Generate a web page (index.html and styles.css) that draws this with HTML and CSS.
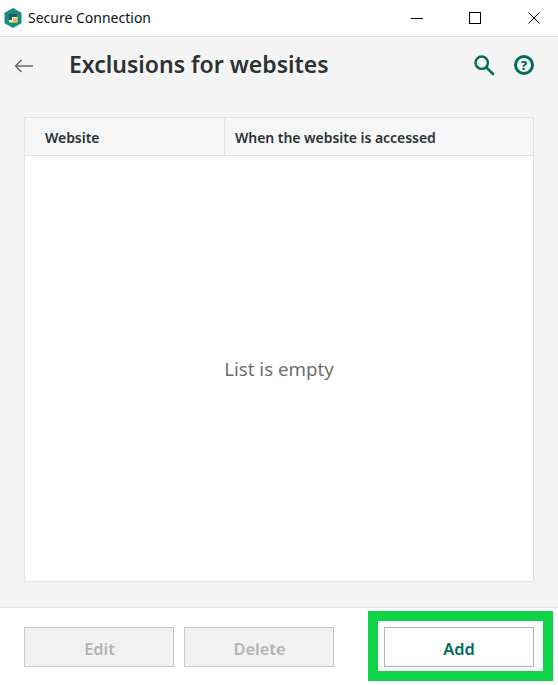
FILE: index.html
```html
<!DOCTYPE html>
<html lang="en">
<head>
<meta charset="utf-8">
<title>Secure Connection</title>
<link rel="stylesheet" href="styles.css">
</head>
<body>
<div class="window">
  <header class="titlebar">
    <div class="app">
      <svg class="logo" width="18" height="20" viewBox="0 0 18 20">
        <path d="M9 0 L17.5 4.8 V15.2 L9 20 L0.5 15.2 V4.8 Z" fill="#12907c"/>
        <rect x="5" y="6" width="8.5" height="8.5" fill="#e4ecec"/>
        <rect x="5" y="6" width="8.5" height="3" fill="#34505c"/>
        <rect x="5" y="9" width="3" height="3" fill="#34505c"/>
        <rect x="9" y="10.5" width="4.5" height="4" fill="#f0b030"/>
      </svg>
      <span class="app-name">Secure Connection</span>
    </div>
    <div class="win-controls">
      <svg class="win-btn win-min" width="12" height="12" viewBox="0 0 12 12"><path d="M0 6.5 H12" stroke="#000" stroke-width="1"/></svg>
      <svg class="win-btn" width="12" height="12" viewBox="0 0 12 12"><rect x="0.5" y="0.5" width="11" height="11" fill="none" stroke="#000" stroke-width="1"/></svg>
      <svg class="win-btn" width="12" height="12" viewBox="0 0 12 12"><path d="M0.5 0.5 L11.5 11.5 M11.5 0.5 L0.5 11.5" stroke="#000" stroke-width="1"/></svg>
    </div>
  </header>
  <main class="content">
    <div class="heading">
      <svg class="back" width="20" height="14" viewBox="0 0 20 14"><path d="M19 7 H1.5 M7.5 1 L1.5 7 L7.5 13" fill="none" stroke="#666" stroke-width="1.4"/></svg>
      <h1 class="title">Exclusions for websites</h1>
      <div class="tools">
        <svg width="22" height="22" viewBox="0 0 22 22"><circle cx="8.7" cy="8.7" r="6.2" fill="none" stroke="#006d5c" stroke-width="2.4"/><path d="M13.3 13.3 L20 20" stroke="#006d5c" stroke-width="2.6" stroke-linecap="round"/></svg>
        <span class="help"><span class="help-mark">?</span></span>
      </div>
    </div>
    <section class="table">
      <div class="thead">
        <div class="th th-site">Website</div>
        <div class="th th-when">When the website is accessed</div>
      </div>
      <div class="tbody">List is empty</div>
    </section>
  </main>
  <footer class="footer">
    <button class="btn" disabled>Edit</button>
    <button class="btn" disabled>Delete</button>
    <button class="btn btn-primary">Add</button>
  </footer>
</div>
</body>
</html>
```
FILE: styles.css
```css
* { box-sizing: border-box; }
html, body { margin: 0; padding: 0; }
body { width: 558px; height: 685px; overflow: hidden; background: #fff; font-family: "Noto Sans", sans-serif; color: #2b3236; }
.window { display: flex; flex-direction: column; height: 685px; }
.titlebar { flex: 0 0 37px; display: flex; justify-content: space-between; align-items: center; background: #fff; border-bottom: 1px solid #dedede; padding-bottom: 1px; }
.app { display: flex; align-items: center; gap: 6px; padding-left: 4px; }
.logo { display: block; }
.app-name { font-size: 14px; color: #111; }
.win-controls { display: flex; gap: 47px; padding-right: 18px; }
.win-btn { display: block; }
.win-min { margin-right: -1px; }
.content { flex: 0 0 571px; background: #f4f4f4; border-bottom: 1px solid #e8e8e8; padding: 0 24px; display: flex; flex-direction: column; }
.heading { flex: 0 0 80px; display: flex; align-items: center; padding-bottom: 26px; }
.back { margin: 4px 0 0 -10px; display: block; }
.title { margin: 0 0 0 35px; font-size: 23px; font-weight: 600; color: #2b3236; flex: 1; line-height: 32px; }
.tools { display: flex; align-items: center; gap: 19px; margin: 2px 0 0; }
.tools svg { display: block; }
.help { width: 20px; height: 20px; border: 3px solid #006d5c; border-radius: 50%; display: flex; align-items: center; justify-content: center; }
.help-mark { font-size: 13px; font-weight: 800; color: #006d5c; line-height: 1; }
.table { flex: 0 0 465px; display: flex; flex-direction: column; background: #fff; border: 1px solid #e2e2e2; }
.thead { flex: 0 0 38px; display: flex; background: #f6f6f6; border-bottom: 1px solid #e2e2e2; }
.th { display: flex; align-items: center; padding-top: 2px; font-size: 14px; font-weight: 600; letter-spacing: -0.05px; color: #2b3236; }
.th-site { width: 200px; padding-left: 20px; border-right: 1px solid #e2e2e2; }
.th-when { padding-left: 10px; }
.tbody { flex: 1; display: flex; align-items: center; justify-content: center; font-size: 18.7px; color: #6e6e6e; }
.footer { flex: 1; display: flex; align-items: flex-start; padding: 19px 24px 0; gap: 10px; background: #fff; }
.btn { width: 150px; height: 40px; padding: 2px 0 0 1px; font-family: "Noto Sans", sans-serif; font-size: 16.4px; font-weight: 600; background: #f1f1f1; border: 1px solid #c8c8c8; color: #b4b4b4; border-radius: 0; }
.btn-primary { position: relative; margin-left: 40px; padding-left: 0; background: #fff; border-color: #b4b4b4; color: #006d5c; }
.btn-primary::after { content: ""; position: absolute; left: -17px; right: -20px; top: -17px; bottom: -15px; border: 10px solid #10d246; }
```
